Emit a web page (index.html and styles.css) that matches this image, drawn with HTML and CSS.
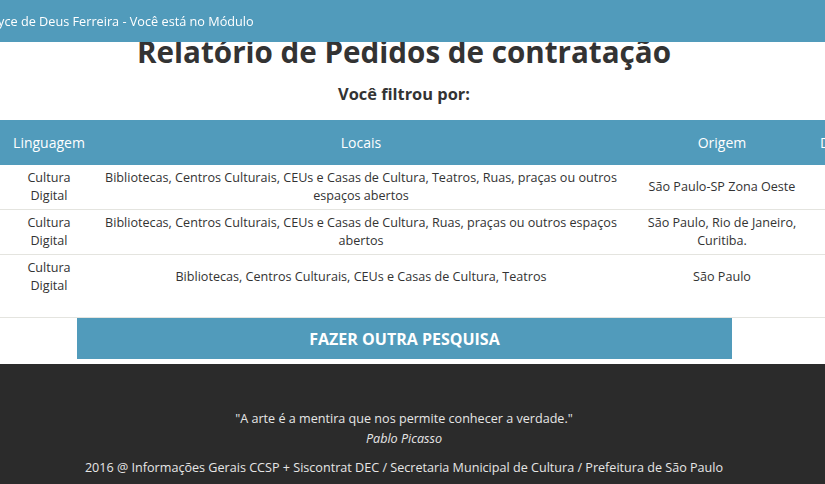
FILE: index.html
```html
<!DOCTYPE html>
<html lang="pt-BR">
<head>
<meta charset="utf-8">
<title>Relatório de Pedidos de contratação</title>
<link rel="stylesheet" href="styles.css">
</head>
<body>
<header class="topbar">
  <span class="topbar-text">Joyce de Deus Ferreira - Você está no Módulo</span>
</header>
<main class="page">
  <h1 class="title">Relatório de Pedidos de contratação</h1>
  <h2 class="subtitle">Você filtrou por:</h2>
  <div class="table-wrap">
    <table class="report">
      <thead>
        <tr>
          <th class="c-ling">Linguagem</th>
          <th class="c-loc">Locais</th>
          <th class="c-orig">Origem</th>
          <th class="c-data">Data</th>
        </tr>
      </thead>
      <tbody>
        <tr>
          <td>Cultura Digital</td>
          <td class="loc">Bibliotecas, Centros Culturais, CEUs e Casas de Cultura, Teatros, Ruas, praças ou outros espaços abertos</td>
          <td>São Paulo-SP Zona Oeste</td>
          <td></td>
        </tr>
        <tr>
          <td>Cultura Digital</td>
          <td class="loc">Bibliotecas, Centros Culturais, CEUs e Casas de Cultura, Ruas, praças ou outros espaços abertos</td>
          <td>São Paulo, Rio de Janeiro, Curitiba.</td>
          <td></td>
        </tr>
        <tr class="tall">
          <td>Cultura Digital</td>
          <td class="loc">Bibliotecas, Centros Culturais, CEUs e Casas de Cultura, Teatros</td>
          <td>São Paulo</td>
          <td></td>
        </tr>
      </tbody>
    </table>
  </div>
  <div class="actions">
    <a class="btn" href="#">FAZER OUTRA PESQUISA</a>
  </div>
</main>
<footer class="footer">
  <div class="footer-inner">
    <p class="quote">"A arte é a mentira que nos permite conhecer a verdade."</p>
    <p class="author">Pablo Picasso</p>
    <p class="copy">2016 @ Informações Gerais CCSP + Siscontrat DEC / Secretaria Municipal de Cultura / Prefeitura de São Paulo</p>
  </div>
</footer>
</body>
</html>
```

FILE: styles.css
```css
html, body {
  margin: 0;
  padding: 0;
  overflow: hidden;
  background: #ffffff;
  font-family: "Open Sans", "Liberation Sans", sans-serif;
  color: #333333;
}

.topbar {
  position: fixed;
  top: 0;
  left: 0;
  right: 0;
  height: 42px;
  background: #519bbb;
  display: flex;
  align-items: center;
  z-index: 10;
}

.topbar-text {
  color: #ffffff;
  font-size: 12.7px;
  margin-left: -13px;
  white-space: nowrap;
}

.page {
  width: 808px;
  padding-top: 32px;
}

.title {
  margin: 0;
  text-align: center;
  font-family: "Open Sans", sans-serif;
  font-weight: 700;
  font-size: 29.6px;
  line-height: 40px;
  color: #333333;
}

.subtitle {
  margin: 12px 0 0;
  text-align: center;
  font-weight: 700;
  font-size: 16.4px;
  line-height: 20px;
  color: #333333;
}

.table-wrap {
  margin-top: 16px;
  width: 825px;
  overflow: hidden;
}

.report {
  border-collapse: collapse;
  table-layout: fixed;
  width: 900px;
  font-size: 12.6px;
  line-height: 18px;
  color: #333333;
}

.report th,
.report td {
  box-sizing: border-box;
}

.report th {
  background: #519bbb;
  color: #ffffff;
  font-weight: 400;
  font-size: 14px;
  height: 45px;
  padding: 0 8px;
  text-align: center;
  vertical-align: middle;
}

.c-ling { width: 98px; }
.c-loc { width: 526px; }
.c-orig { width: 196px; }
.report th.c-data { width: 80px; text-align: left; padding-left: 0; }

.report td {
  padding: 4px 8px;
  text-align: center;
  vertical-align: middle;
  border-bottom: 1px solid #e4e4df;
}

.report td.loc {
  padding-left: 4px;
  padding-right: 4px;
}

.report tr.tall td {
  padding-bottom: 22px;
}

.actions {
  display: flex;
  justify-content: center;
  padding-bottom: 5px;
}

.btn {
  width: 655px;
  height: 41px;
  margin-left: 1px;
  background: #519bbb;
  color: #ffffff;
  font-weight: 700;
  font-size: 16px;
  text-decoration: none;
  display: flex;
  align-items: center;
  justify-content: center;
}

.footer {
  background: #2b2b2b;
  height: 130px;
}

.footer-inner {
  width: 808px;
  padding-top: 45px;
  text-align: center;
  color: #e6e6e6;
  font-size: 12.6px;
  line-height: 20px;
}

.footer-inner p {
  margin: 0;
}

.author {
  font-style: italic;
}

.copy {
  margin-top: 9px !important;
}
```
